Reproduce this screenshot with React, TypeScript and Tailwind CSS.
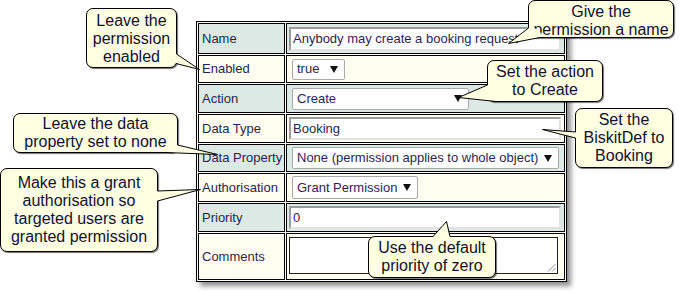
import React from "react";

const FONT = "font-['Liberation_Sans',Arial,sans-serif]";
const TEAL = "bg-[#dce9e5]";
const CREAM = "bg-[#fffdf0]";
const INK = "text-[#2a1f55]";

function Arrow() {
  return (
    <svg width="8" height="7" viewBox="0 0 8 7" className="shrink-0">
      <polygon points="0,0 8,0 4,7" fill="#111" />
    </svg>
  );
}

function TextBox({ value, h }: { value: string; h: string }) {
  return (
    <div
      className={`ml-[2px] w-[272px] ${h} bg-white border-2 border-t-[#9c9c9c] border-l-[#9c9c9c] border-b-[#e2e2e2] border-r-[#e2e2e2] flex items-center pl-[2px] text-[13px] ${INK} whitespace-nowrap overflow-hidden`}
    >
      {value}
    </div>
  );
}

function Select({ value, w, h }: { value: string; w: string; h: string }) {
  return (
    <div
      className={`ml-[5px] ${w} ${h} bg-white border border-[#a9a9a9] rounded-[2px] flex items-center justify-between pl-[4px] pr-[6px] text-[13px] ${INK} whitespace-nowrap`}
    >
      <span>{value}</span>
      <Arrow />
    </div>
  );
}

function Label({ text, bg }: { text: string; bg: string }) {
  return (
    <div className={`${bg} border border-black flex items-center pl-[3px] text-[13px] ${INK} whitespace-nowrap`}>
      {text}
    </div>
  );
}

function Cell({ bg, children, top }: { bg: string; children: React.ReactNode; top?: boolean }) {
  return (
    <div className={`${bg} border border-black flex ${top ? "items-start pt-[3px]" : "items-center"}`}>
      {children}
    </div>
  );
}

function Callout({
  cls,
  lines,
  shift,
}: {
  cls: string;
  lines: string[];
  shift?: string;
}) {
  return (
    <div
      className={`absolute ${cls} bg-[#ffffe1] border border-black rounded-[7px] shadow-[1px_1px_1px_rgba(0,0,0,0.55)] flex items-center justify-center text-[16px] leading-[18px] text-[#101035] whitespace-nowrap`}
    >
      <div className={`flex flex-col items-center ${shift ?? ""}`}>
        {lines.map((l, i) => (
          <span key={i}>{l}</span>
        ))}
      </div>
    </div>
  );
}

const wedges = [
  { fill: "172,54 176.5,54 199.5,69.5 176.5,63 172,64", line: "176.5,54 199.5,69.5 176,63.5" },
  { fill: "532,26 528.5,28 508.5,43.5 540,37.5 541,33", line: "528.5,28 508.5,43.5 540,37.5" },
  { fill: "491,84 487.5,85 458.5,97.5 496,101.5 497,97", line: "487.5,85 458.5,97.5 496,101.5" },
  { fill: "174,144 177.5,145 217.5,154.5 166,152.5 165,149", line: "177.5,145 217.5,154.5 166,152.5" },
  { fill: "154,191 157.5,191 200.5,189.5 157.5,201 154,201", line: "157.5,191 200.5,189.5 157.5,201" },
  { fill: "579,132 575.5,132 542.5,129.5 575.5,138 579,138", line: "575.5,132 542.5,129.5 575.5,138" },
  { fill: "433,240 433,236.5 446.5,221.5 450,236.5 450,240", line: "433,236.5 446.5,221.5 450,236.5" },
];

export default function App() {
  return (
    <div className={`relative w-[679px] h-[291px] overflow-hidden bg-white ${FONT}`}>
      <div className="pl-[196px] pt-[21px]">
        <div className="w-[371px] border border-black bg-white p-px grid grid-cols-[87px_279px] grid-rows-[31px_28px_29px_29px_28px_29px_29px_47px] gap-px shadow-[4px_4px_5px_rgba(0,0,0,0.45)]">
          <Label text="Name" bg={TEAL} />
          <Cell bg={TEAL}>
            <TextBox value="Anybody may create a booking request" h="h-[24px]" />
          </Cell>

          <Label text="Enabled" bg={CREAM} />
          <Cell bg={CREAM}>
            <Select value="true" w="w-[53px]" h="h-[21px]" />
          </Cell>

          <Label text="Action" bg={TEAL} />
          <Cell bg={TEAL}>
            <Select value="Create" w="w-[177px]" h="h-[22px]" />
          </Cell>

          <Label text="Data Type" bg={CREAM} />
          <Cell bg={CREAM}>
            <TextBox value="Booking" h="h-[23px]" />
          </Cell>

          <Label text="Data Property" bg={TEAL} />
          <Cell bg={TEAL}>
            <Select value="None (permission applies to whole object)" w="w-[267px]" h="h-[22px]" />
          </Cell>

          <Label text="Authorisation" bg={CREAM} />
          <Cell bg={CREAM}>
            <Select value="Grant Permission" w="w-[126px]" h="h-[23px]" />
          </Cell>

          <Label text="Priority" bg={TEAL} />
          <Cell bg={TEAL}>
            <TextBox value="0" h="h-[23px]" />
          </Cell>

          <Label text="Comments" bg={CREAM} />
          <Cell bg={CREAM} top>
            <div className="ml-[2px] w-[269px] h-[37px] bg-white border border-[#222] flex items-end justify-end">
              <svg width="9" height="9" viewBox="0 0 9 9" className="mb-[1px] mr-[1px]">
                <line x1="8.5" y1="1" x2="1" y2="8.5" stroke="#888" strokeWidth="1" />
                <line x1="8.5" y1="5" x2="5" y2="8.5" stroke="#888" strokeWidth="1" />
              </svg>
            </div>
          </Cell>
        </div>
      </div>

      <Callout cls="left-[86px] top-[8px] w-[91px] h-[60px]" lines={["Leave the", "permission", "enabled"]} shift="translate-y-[1px]" />
      <Callout cls="left-[528px] top-[0px] w-[146px] h-[38px]" lines={["Give the", "permission a name"]} shift="translate-y-[2px]" />
      <Callout cls="left-[487px] top-[60px] w-[116px] h-[42px]" lines={["Set the action", "to Create"]} />
      <Callout cls="left-[13px] top-[113px] w-[165px] h-[40px]" lines={["Leave the data", "property set to none"]} />
      <Callout
        cls="left-[0px] top-[168px] w-[158px] h-[84px]"
        lines={["Make this a grant", "authorisation so", "targeted users are", "granted permission"]}
      />
      <Callout cls="left-[575px] top-[108px] w-[98px] h-[60px]" lines={["Set the", "BiskitDef to", "Booking"]} />
      <Callout cls="left-[368px] top-[236px] w-[128px] h-[42px]" lines={["Use the default", "priority of zero"]} />

      <svg className="absolute left-0 top-0 pointer-events-none" width="679" height="291" viewBox="0 0 679 291">
        {wedges.map((w, i) => (
          <g key={i}>
            <polygon points={w.fill} fill="#ffffe1" />
            <polyline points={w.line} fill="none" stroke="#000" strokeWidth="1" />
          </g>
        ))}
      </svg>
    </div>
  );
}
